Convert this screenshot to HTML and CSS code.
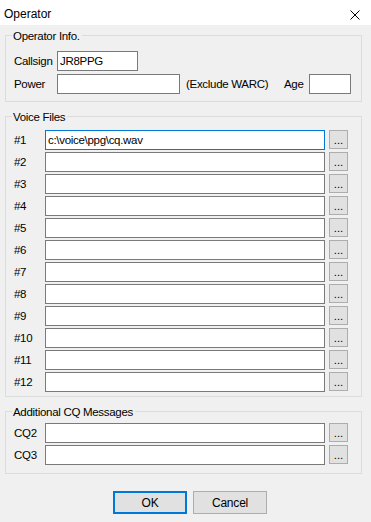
FILE: index.html
```html
<!DOCTYPE html>
<html lang="en">
  <head>
    <meta charset="UTF-8" />
    <title>Operator</title>
    <link rel="stylesheet" href="styles.css">
  </head>
  <body>
    <div class="titlebar">
      <span class="title">Operator</span>
      <svg class="close" width="10" height="10" viewBox="0 0 10 10">
        <path d="M0.5 0.5 L9.5 9.5 M9.5 0.5 L0.5 9.5" stroke="#000" stroke-width="1" fill="none" />
      </svg>
    </div>

    <div class="dialog">
      <div class="group info">
        <div class="groupTitle">Operator Info.</div>
        <div class="row">
          <span class="lbl">Callsign</span
          ><input class="field callsign" type="text" value="JR8PPG" />
        </div>
        <div class="row">
          <span class="lbl">Power</span
          ><input class="field power" type="text" /><span class="note">(Exclude WARC)</span
          ><span class="ageLbl">Age</span><input class="field age" type="text" />
        </div>
      </div>

      <div class="group voice">
        <div class="groupTitle">Voice Files</div>
        <div class="row"><span class="lbl">#1</span><input class="field path focus" type="text" value="c:\voice\ppg\cq.wav" /><button class="browse">...</button></div>
        <div class="row"><span class="lbl">#2</span><input class="field path" type="text" /><button class="browse">...</button></div>
        <div class="row"><span class="lbl">#3</span><input class="field path" type="text" /><button class="browse">...</button></div>
        <div class="row"><span class="lbl">#4</span><input class="field path" type="text" /><button class="browse">...</button></div>
        <div class="row"><span class="lbl">#5</span><input class="field path" type="text" /><button class="browse">...</button></div>
        <div class="row"><span class="lbl">#6</span><input class="field path" type="text" /><button class="browse">...</button></div>
        <div class="row"><span class="lbl">#7</span><input class="field path" type="text" /><button class="browse">...</button></div>
        <div class="row"><span class="lbl">#8</span><input class="field path" type="text" /><button class="browse">...</button></div>
        <div class="row"><span class="lbl">#9</span><input class="field path" type="text" /><button class="browse">...</button></div>
        <div class="row"><span class="lbl">#10</span><input class="field path" type="text" /><button class="browse">...</button></div>
        <div class="row"><span class="lbl">#11</span><input class="field path" type="text" /><button class="browse">...</button></div>
        <div class="row"><span class="lbl">#12</span><input class="field path" type="text" /><button class="browse">...</button></div>
      </div>

      <div class="group cq">
        <div class="groupTitle">Additional CQ Messages</div>
        <div class="row"><span class="lbl">CQ2</span><input class="field path" type="text" /><button class="browse">...</button></div>
        <div class="row"><span class="lbl">CQ3</span><input class="field path" type="text" /><button class="browse">...</button></div>
      </div>

      <div class="actions">
        <button class="btn default">OK</button>
        <button class="btn">Cancel</button>
      </div>
    </div>
  </body>
</html>
```

FILE: styles.css
```css
html,
body {
  margin: 0;
  width: 371px;
  height: 522px;
  overflow: hidden;
}
body {
  background: #f0f0f0;
  font-family: 'Liberation Sans', Arial, sans-serif;
  font-size: 11.5px;
  letter-spacing: -0.3px;
  color: #000;
}
.titlebar {
  height: 25px;
  background: #fff;
  display: flex;
  align-items: center;
  justify-content: space-between;
  padding: 0 11px 0 4px;
}
.title {
  font-size: 12px;
  letter-spacing: 0;
  margin-top: 2px;
}
.close {
  display: block;
  margin-top: 5px;
}
.dialog {
  padding-top: 10px;
}
.group {
  border: 1px solid #dcdcdc;
  margin: 0 9px 0 5px;
  padding: 0 0 7px 8px;
}
.group + .group {
  margin-top: 14px;
}
.groupTitle {
  width: fit-content;
  margin: -7px 0 0 -2px;
  padding: 0 2px 0 1px;
  line-height: 14px;
  background: #f0f0f0;
}
.row {
  display: flex;
  align-items: flex-start;
  height: 20px;
}
.row + .row {
  margin-top: 2px;
}
.lbl {
  width: 31px;
  line-height: 20px;
}
.info .row {
  margin-top: 3px;
}
.info .groupTitle + .row {
  margin-top: 8px;
}
.info .lbl {
  width: 43px;
}
.voice {
  padding-bottom: 4px;
}
.voice .groupTitle + .row {
  margin-top: 6px;
}
.cq {
  padding-bottom: 8px;
}
.cq .groupTitle + .row {
  margin-top: 4px;
}
.field {
  box-sizing: border-box;
  height: 20px;
  margin: 0;
  padding: 0 2px;
  border: 1px solid #7a7a7a;
  border-radius: 0;
  background: #fff;
  font: inherit;
  letter-spacing: inherit;
  color: #000;
  outline: none;
}
.field.focus {
  border-color: #0078d7;
}
.callsign {
  width: 81px;
}
.power {
  width: 123px;
}
.note {
  width: 98px;
  margin-left: 6px;
  line-height: 20px;
}
.ageLbl {
  width: 25px;
  line-height: 20px;
}
.age {
  width: 42px;
}
.path {
  width: 280px;
}
.browse {
  box-sizing: border-box;
  width: 19px;
  height: 19px;
  margin: 0 0 0 4px;
  padding: 0;
  border: 1px solid #adadad;
  border-radius: 0;
  background: #e1e1e1;
  font: inherit;
  color: #000;
  line-height: 19px;
}
.actions {
  display: flex;
  gap: 6px;
  margin-top: 17px;
  padding-left: 113px;
}
.btn {
  box-sizing: border-box;
  width: 74px;
  height: 23px;
  margin: 0;
  padding: 0;
  border: 1px solid #adadad;
  border-radius: 0;
  background: #e1e1e1;
  font: inherit;
  font-size: 12px;
  letter-spacing: -0.2px;
  color: #000;
}
.btn.default {
  border: 2px solid #0078d7;
}
```
